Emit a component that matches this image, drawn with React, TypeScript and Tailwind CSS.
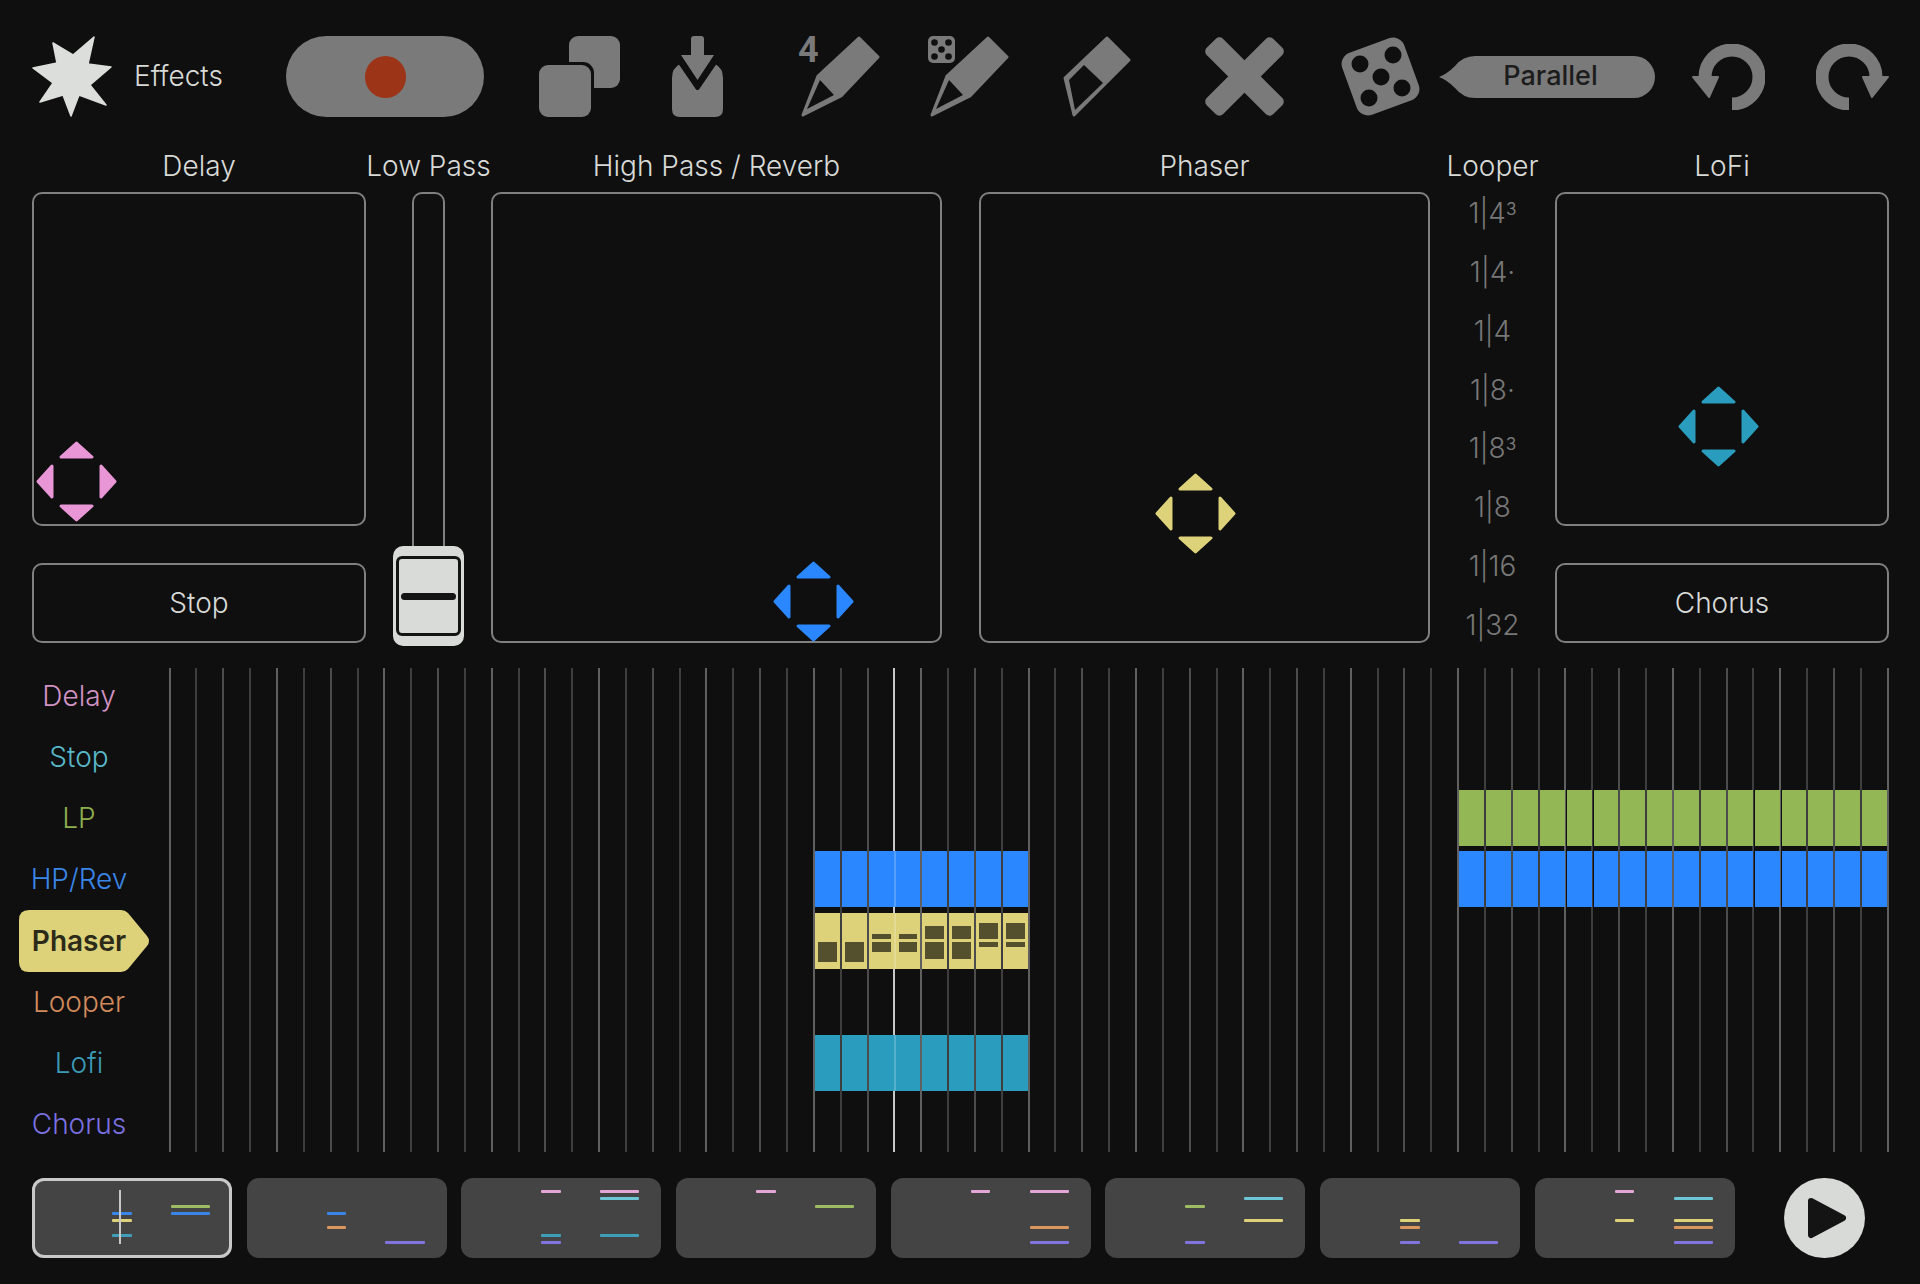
import React from "react";

const ICON = "#7a7a7a";

const pads = {
  pink: "text-[#e896d6]",
  blue: "text-[#2b87ff]",
  yellow: "text-[#ddd27a]",
  teal: "text-[#2a9dbe]",
};

const trackLabels = [
  { name: "Delay", color: "text-[#d193c4]" },
  { name: "Stop", color: "text-[#58b9c9]" },
  { name: "LP", color: "text-[#8fb050]" },
  { name: "HP/Rev", color: "text-[#3a86e8]" },
  { name: "Phaser", color: "text-[#2c2a18]", active: true },
  { name: "Looper", color: "text-[#d18a5c]" },
  { name: "Lofi", color: "text-[#3b9cb8]" },
  { name: "Chorus", color: "text-[#7a70e0]" },
];

const looperValues = [
  { v: "1|4", sup: "3" },
  { v: "1|4·" },
  { v: "1|4" },
  { v: "1|8·" },
  { v: "1|8", sup: "3" },
  { v: "1|8" },
  { v: "1|16" },
  { v: "1|32" },
];

// row, first step, number of steps, colour
const mainBars = [
  { row: 2, start: 48, len: 16, color: "bg-[#93b755]" },
  { row: 3, start: 24, len: 8, color: "bg-[#2b87ff]" },
  { row: 3, start: 48, len: 16, color: "bg-[#2b87ff]" },
  { row: 6, start: 24, len: 8, color: "bg-[#2a9dbe]" },
];

// upper and lower block height per step of the phaser automation
const phaserSteps = [
  [0, 20], [0, 20], [5, 10], [5, 10], [13, 17], [13, 17], [16, 5], [16, 5],
];

const mini = {
  pink: "bg-[#e3a6d6]",
  stop: "bg-[#6cc6d6]",
  green: "bg-[#9dbb62]",
  blue: "bg-[#3a86e8]",
  yellow: "bg-[#ddd27a]",
  orange: "bg-[#d9965f]",
  teal: "bg-[#3f9fb8]",
  purple: "bg-[#7f74e0]",
};

const S = 24; // short clip: 8 steps from 24
const L = 48; // long clip: 16 steps from 48

const patterns: { row: number; start: number; color: string }[][] = [
  [
    { row: 2, start: L, color: mini.green },
    { row: 3, start: S, color: mini.blue },
    { row: 3, start: L, color: mini.blue },
    { row: 4, start: S, color: mini.yellow },
    { row: 6, start: S, color: mini.teal },
  ],
  [
    { row: 3, start: S, color: mini.blue },
    { row: 5, start: S, color: mini.orange },
    { row: 7, start: L, color: mini.purple },
  ],
  [
    { row: 0, start: S, color: mini.pink },
    { row: 0, start: L, color: mini.pink },
    { row: 1, start: L, color: mini.stop },
    { row: 6, start: S, color: mini.teal },
    { row: 6, start: L, color: mini.teal },
    { row: 7, start: S, color: mini.purple },
  ],
  [
    { row: 0, start: S, color: mini.pink },
    { row: 2, start: L, color: mini.green },
  ],
  [
    { row: 0, start: S, color: mini.pink },
    { row: 0, start: L, color: mini.pink },
    { row: 5, start: L, color: mini.orange },
    { row: 7, start: L, color: mini.purple },
  ],
  [
    { row: 1, start: L, color: mini.stop },
    { row: 2, start: S, color: mini.green },
    { row: 4, start: L, color: mini.yellow },
    { row: 7, start: S, color: mini.purple },
  ],
  [
    { row: 4, start: S, color: mini.yellow },
    { row: 5, start: S, color: mini.orange },
    { row: 7, start: S, color: mini.purple },
    { row: 7, start: L, color: mini.purple },
  ],
  [
    { row: 0, start: S, color: mini.pink },
    { row: 1, start: L, color: mini.stop },
    { row: 4, start: S, color: mini.yellow },
    { row: 4, start: L, color: mini.yellow },
    { row: 5, start: L, color: mini.orange },
    { row: 7, start: L, color: mini.purple },
  ],
];

function lineColor(i: number) {
  if (i === 27) return "bg-[#c8c8c8]";
  if (i % 4 === 0) return "bg-[#606060]";
  if (i % 2 === 0) return "bg-[#4c4c4c]";
  return "bg-[#3e3e3e]";
}

function Handle({ color, className }: { color: string; className: string }) {
  return (
    <svg viewBox="0 0 81 81" className={`absolute w-[81px] h-[81px] ${color} ${className}`} fill="currentColor" stroke="currentColor" strokeWidth="3" strokeLinejoin="round">
      <path d="M25 16 L40.5 2 L56 16 Z" />
      <path d="M25 65 L40.5 79 L56 65 Z" />
      <path d="M16 25 L2 40.5 L16 56 Z" />
      <path d="M65 25 L79 40.5 L65 56 Z" />
    </svg>
  );
}

function PencilIcon() {
  return (
    <svg viewBox="0 0 80 81" className="w-[80px] h-[81px]" strokeLinejoin="round">
      <path d="M59 2 L78 21 L41 60 L3 79 L18 40 Z" fill={ICON} stroke={ICON} strokeWidth="3" />
      <path d="M20 44 L34 59 L7 73 Z" fill="#0f0f0f" />
    </svg>
  );
}

function App() {
  return (
    <div className="w-[1920px] h-[1284px] bg-[#0f0f0f] font-['Inter',sans-serif] font-light text-[28px] text-[#d8dad7] overflow-hidden">
      {/* TOOLBAR */}
      <header className="flex items-center h-[81px] mt-[36px] pl-[31px]">
        <svg viewBox="0 0 82 81" className="w-[82px] h-[81px]" fill="#dcdedb" stroke="#dcdedb" strokeWidth="1.5" strokeLinejoin="round">
          <path d="M63 1 L57 28 L80 31 L59 49 L75 69 L48 59 L40 80 L32 59 L9 66 L22 47 L2 32 L26 27 L22 7 L42 19 Z" />
        </svg>
        <div className="ml-[21px] w-[90px] pb-[2px]">Effects</div>

        <div className="ml-[62px] w-[198px] h-[81px] rounded-full bg-[#7a7a7a] flex items-center justify-center">
          <div className="w-[41px] h-[42px] rounded-full bg-[#9c3417]" />
        </div>

        <svg viewBox="0 0 81 81" className="ml-[55px] w-[81px] h-[81px]">
          <rect x="30" y="0" width="51" height="52" rx="9" fill={ICON} />
          <rect x="-3" y="26" width="58" height="58" rx="11" fill="#0f0f0f" />
          <rect x="0" y="29" width="52" height="52" rx="9" fill={ICON} />
        </svg>

        <svg viewBox="0 0 51 81" className="ml-[52px] w-[51px] h-[81px]">
          <path d="M8 28 L25 54 L43 28 Q51 32 51 42 V73 Q51 81 43 81 H8 Q0 81 0 73 V42 Q0 32 8 28 Z" fill={ICON} />
          <path d="M7 25 L25.5 52 L44 25" fill="none" stroke="#0f0f0f" strokeWidth="4" strokeLinejoin="round" />
          <path d="M19 3 Q19 0 22 0 H29 Q32 0 32 3 V19 H42 L25.5 44 L9 19 H19 Z" fill={ICON} />
        </svg>

        <div className="ml-[77px] relative">
          <PencilIcon />
          <span className="absolute left-[-2px] top-[-4px] font-['Roboto',sans-serif] text-[36px] leading-[36px] font-bold text-[#7a7a7a]">4</span>
        </div>

        <div className="ml-[49px] relative">
          <PencilIcon />
          <svg viewBox="0 0 27 27" className="absolute left-[-1px] top-0 w-[27px] h-[27px]">
            <rect width="27" height="27" rx="5" fill={ICON} />
            <g fill="#0f0f0f">
              <circle cx="6.5" cy="6.5" r="3.3" />
              <circle cx="20.5" cy="6.5" r="3.3" />
              <circle cx="13.5" cy="13.5" r="3.3" />
              <circle cx="6.5" cy="20.5" r="3.3" />
              <circle cx="20.5" cy="20.5" r="3.3" />
            </g>
          </svg>
        </div>

        <svg viewBox="0 0 68 81" className="ml-[54px] w-[68px] h-[81px]" strokeLinejoin="round">
          <path d="M44 2 L66 24 L11 79 L2 42 Z" fill={ICON} stroke={ICON} strokeWidth="3" />
          <path d="M21 29 L40 47 L12 74 L6 44 Z" fill="#0f0f0f" />
        </svg>

        <svg viewBox="0 0 81 81" className="ml-[73px] w-[81px] h-[81px]" fill={ICON}>
          <rect x="-11.5" y="-47" width="23" height="94" rx="5" transform="translate(40.5 40.5) rotate(45)" />
          <rect x="-11.5" y="-47" width="23" height="94" rx="5" transform="translate(40.5 40.5) rotate(-45)" />
        </svg>

        <svg viewBox="0 0 81 81" className="ml-[55px] w-[81px] h-[81px]">
          <rect x="7.5" y="7.5" width="66" height="66" rx="12" fill={ICON} transform="rotate(-20 40.5 40.5)" />
          <g fill="#0f0f0f">
            <circle cx="20" cy="28" r="8.5" />
            <circle cx="53" cy="19" r="8.5" />
            <circle cx="41" cy="41" r="8.5" />
            <circle cx="29" cy="62" r="8.5" />
            <circle cx="62" cy="52" r="8.5" />
          </g>
        </svg>

        <div className="ml-[18px] relative w-[216px] h-[42px] flex items-center justify-center pl-[7px] font-medium text-[#1c1c1c] text-[27px]">
          <svg viewBox="0 0 216 42" className="absolute inset-0 w-[216px] h-[42px]" fill={ICON}>
            <path d="M0 21 Q8 18 16 10 Q24 0 36 0 H195 A21 21 0 0 1 195 42 H36 Q24 42 16 32 Q8 24 0 21 Z" />
          </svg>
          <span className="relative">Parallel</span>
        </div>

        <svg viewBox="0 0 73 66" className="ml-[37px] w-[73px] h-[66px]" fill="none">
          <path d="M13 33 A27 27 0 1 1 40 60" stroke={ICON} strokeWidth="13" />
          <path d="M1 33 H26 L17 53 Z" fill={ICON} stroke={ICON} strokeWidth="2" strokeLinejoin="round" />
        </svg>
        <svg viewBox="0 0 73 66" className="ml-[51px] w-[73px] h-[66px] -scale-x-100" fill="none">
          <path d="M13 33 A27 27 0 1 1 40 60" stroke={ICON} strokeWidth="13" />
          <path d="M1 33 H26 L17 53 Z" fill={ICON} stroke={ICON} strokeWidth="2" strokeLinejoin="round" />
        </svg>
      </header>

      {/* PADS */}
      <section className="flex pl-[32px] mt-[24px]">
        <div className="w-[334px]">
          <div className="h-[51px] pb-[2px] flex items-center justify-center">Delay</div>
          <div className="relative h-[334px] border-2 border-[#808080] rounded-[10px]">
            <Handle color={pads.pink} className="left-[2px] top-[247px]" />
          </div>
          <div className="mt-[37px] h-[80px] border-2 border-[#808080] rounded-[10px] flex items-center justify-center">Stop</div>
        </div>

        <div className="ml-[27px] w-[71px] flex flex-col items-center">
          <div className="h-[51px] pb-[2px] flex items-center justify-center whitespace-nowrap">Low Pass</div>
          <div className="w-[33px] h-[354px] border-x-2 border-t-2 border-[#808080] rounded-t-[10px]" />
          <div className="w-[71px] h-[100px] rounded-[10px] bg-[#d9dbd8] p-[3px] pt-[10px] pb-[10px]">
            <div className="h-full border-[3px] border-[#141414] rounded-[6px] flex items-center px-[2px]">
              <div className="w-full h-[7px] rounded-full bg-[#141414]" />
            </div>
          </div>
        </div>

        <div className="ml-[27px] w-[451px]">
          <div className="h-[51px] pb-[2px] flex items-center justify-center">High Pass / Reverb</div>
          <div className="relative h-[451px] border-2 border-[#808080] rounded-[10px]">
            <Handle color={pads.blue} className="left-[280px] top-[367px]" />
          </div>
        </div>

        <div className="ml-[37px] w-[451px]">
          <div className="h-[51px] pb-[2px] flex items-center justify-center">Phaser</div>
          <div className="relative h-[451px] border-2 border-[#808080] rounded-[10px]">
            <Handle color={pads.yellow} className="left-[174px] top-[279px]" />
          </div>
        </div>

        <div className="w-[125px]">
          <div className="h-[51px] pb-[2px] flex items-center justify-center">Looper</div>
          <div className="h-[451px] pt-[4px] pb-[1px] flex flex-col justify-between items-center text-[#777777]">
            {looperValues.map((l, i) => (
              <div key={i} className="leading-[34px] h-[34px]">
                {l.v}
                {l.sup && <span className="relative top-[-8px] text-[17px] leading-none font-normal">{l.sup}</span>}
              </div>
            ))}
          </div>
        </div>

        <div className="w-[334px]">
          <div className="h-[51px] pb-[2px] flex items-center justify-center">LoFi</div>
          <div className="relative h-[334px] border-2 border-[#808080] rounded-[10px]">
            <Handle color={pads.teal} className="left-[121px] top-[192px]" />
          </div>
          <div className="mt-[37px] h-[80px] border-2 border-[#808080] rounded-[10px] flex items-center justify-center">Chorus</div>
        </div>
      </section>

      {/* TIMELINE */}
      <section className="flex mt-[22px]">
        <div className="w-[168.6px] grid grid-rows-[repeat(8,56px)] gap-y-[5.14px]">
          {trackLabels.map((t) => (
            <div key={t.name} className={`relative w-[158px] flex items-center justify-center ${t.color} ${t.active ? "font-semibold" : ""}`}>
              {t.active && (
                <svg viewBox="0 0 130 62" className="absolute left-[19px] top-[-3px] w-[130px] h-[62px]" fill="#ddd27a">
                  <path d="M10 0 H102 Q106 0 109 3 L128 26 Q132 31 128 36 L109 59 Q106 62 102 62 H10 Q0 62 0 52 V10 Q0 0 10 0 Z" />
                </svg>
              )}
              <span className="relative">{t.name}</span>
            </div>
          ))}
        </div>

        <div className="relative w-[1720.4px] h-[484px]">
          <div className="absolute inset-0 flex justify-between">
            {Array.from({ length: 65 }, (_, i) => (
              <div key={i} className={`w-[2px] h-full ${lineColor(i)}`} />
            ))}
          </div>

          <div className="relative h-full px-[1px] grid grid-cols-[repeat(64,1fr)] grid-rows-[repeat(8,56px)] gap-y-[5.14px]">
            {mainBars.flatMap((b) =>
              Array.from({ length: b.len }, (_, i) => {
                const step = b.start + i;
                return (
                  <div
                    key={`${b.row}-${step}`}
                    style={{ gridColumn: step + 1, gridRow: b.row + 1 }}
                    className={`${b.color} mr-[1px] ${step === 27 ? "-ml-[1px] border-l-2 border-white/20" : "ml-[1px]"}`}
                  />
                );
              })
            )}
            {phaserSteps.map(([up, down], i) => {
              const step = 24 + i;
              return (
                <div
                  key={step}
                  style={{ gridColumn: step + 1, gridRow: 5 }}
                  className={`bg-[#ddd27a] mr-[1px] px-[3px] flex flex-col ${step === 27 ? "-ml-[1px] border-l-2 border-white/20" : "ml-[1px]"}`}
                >
                  <div className="h-[26px] flex flex-col justify-end">
                    <div className="bg-[#544f2d]" style={{ height: up }} />
                  </div>
                  <div className="mt-[3px] bg-[#544f2d]" style={{ height: down }} />
                </div>
              );
            })}
          </div>
        </div>
      </section>

      {/* PATTERNS */}
      <section className="flex items-center pl-[32px] mt-[26px]">
        {patterns.map((p, i) => (
          <div
            key={i}
            className={`relative w-[200px] h-[80px] mr-[14.7px] rounded-[12px] bg-[#444444] pl-[21px] pr-[22px] pt-[12px] ${i === 0 ? "ring-[3px] ring-inset ring-[#c9c9c9]" : ""}`}
          >
            <div className="grid grid-cols-[repeat(64,1fr)] grid-rows-[repeat(8,3px)] gap-y-[4.3px]">
              {p.map((b) => (
                <div
                  key={`${b.row}-${b.start}`}
                  className={`rounded-[1px] ${b.color}`}
                  style={{ gridRow: b.row + 1, gridColumn: `${b.start + 1} / span ${b.start === L ? 16 : 8}` }}
                />
              ))}
            </div>
            {i === 0 && <div className="absolute left-[87px] top-[12px] w-[2px] h-[54px] bg-[#c8c8c8]" />}
          </div>
        ))}
        <div className="ml-[34px] w-[81px] h-[80px] rounded-full bg-[#d8dad7] flex items-center justify-center">
          <svg viewBox="0 0 40 42" className="ml-[6px] w-[40px] h-[42px]" fill="#141414" stroke="#141414" strokeWidth="6" strokeLinejoin="round">
            <path d="M4 4 L36 21 L4 38 Z" />
          </svg>
        </div>
      </section>
    </div>
  );
}

export default App;
